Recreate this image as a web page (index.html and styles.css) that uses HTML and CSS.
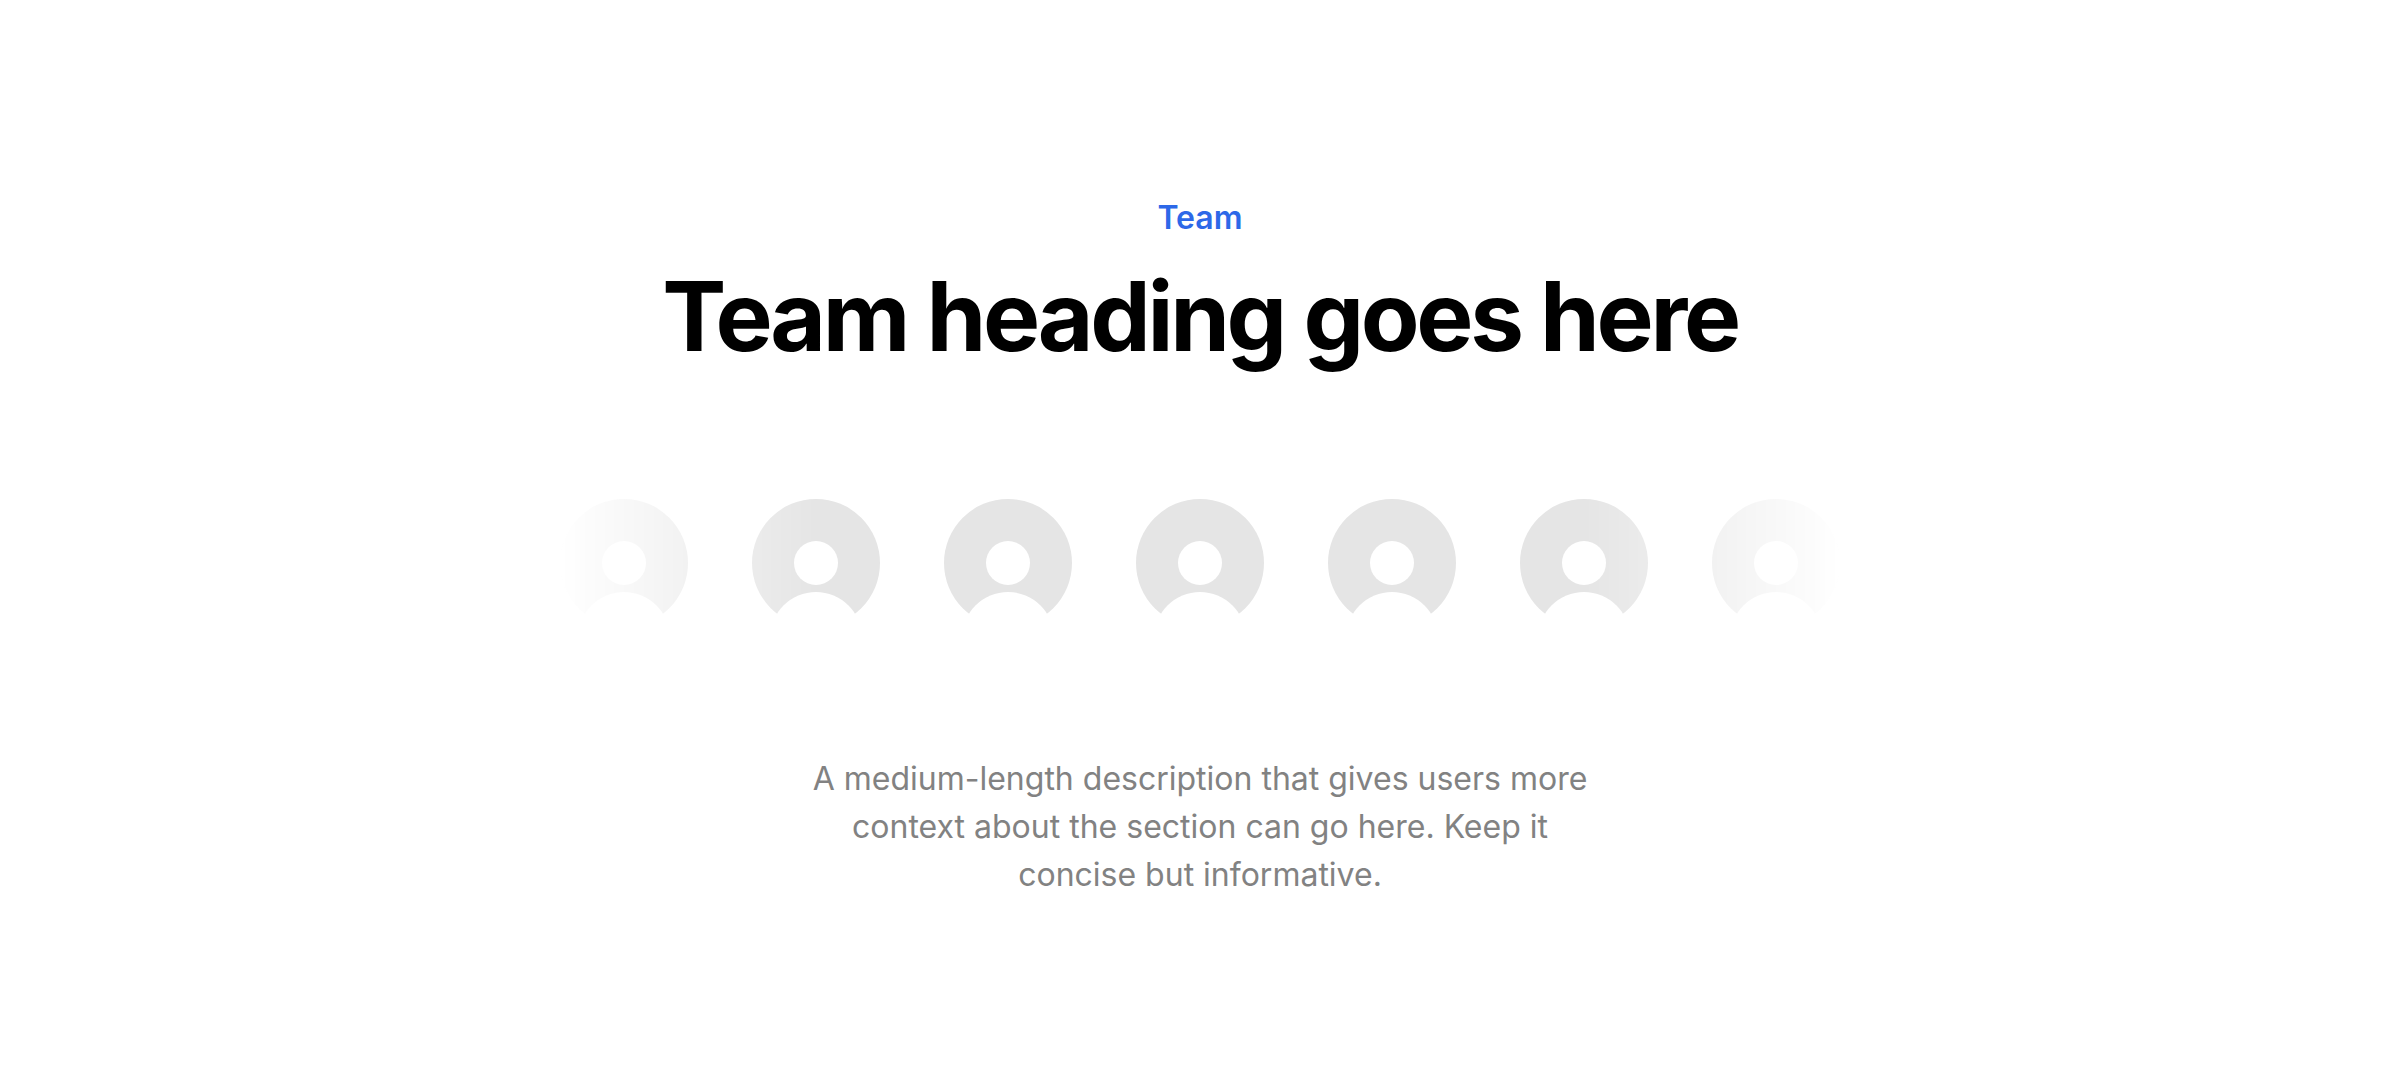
FILE: index.html
```html
<!DOCTYPE html>
<html lang="en">
<head>
    <meta charset="UTF-8">
    <meta name="viewport" content="width=device-width, initial-scale=1.0">
    <title>Team</title>
    <link rel="stylesheet" href="styles.css">
</head>
<body>
    <section class="team">
        <p class="eyebrow">Team</p>
        <h1>Team heading goes here</h1>
        <div class="avatars">
            <svg class="avatar" viewBox="0 0 128 128"><circle class="disc" cx="64" cy="64" r="64"/><circle class="cut" cx="64" cy="64" r="22"/><circle class="cut" cx="64" cy="139" r="46"/></svg>
            <svg class="avatar" viewBox="0 0 128 128"><circle class="disc" cx="64" cy="64" r="64"/><circle class="cut" cx="64" cy="64" r="22"/><circle class="cut" cx="64" cy="139" r="46"/></svg>
            <svg class="avatar" viewBox="0 0 128 128"><circle class="disc" cx="64" cy="64" r="64"/><circle class="cut" cx="64" cy="64" r="22"/><circle class="cut" cx="64" cy="139" r="46"/></svg>
            <svg class="avatar" viewBox="0 0 128 128"><circle class="disc" cx="64" cy="64" r="64"/><circle class="cut" cx="64" cy="64" r="22"/><circle class="cut" cx="64" cy="139" r="46"/></svg>
            <svg class="avatar" viewBox="0 0 128 128"><circle class="disc" cx="64" cy="64" r="64"/><circle class="cut" cx="64" cy="64" r="22"/><circle class="cut" cx="64" cy="139" r="46"/></svg>
            <svg class="avatar" viewBox="0 0 128 128"><circle class="disc" cx="64" cy="64" r="64"/><circle class="cut" cx="64" cy="64" r="22"/><circle class="cut" cx="64" cy="139" r="46"/></svg>
            <svg class="avatar" viewBox="0 0 128 128"><circle class="disc" cx="64" cy="64" r="64"/><circle class="cut" cx="64" cy="64" r="22"/><circle class="cut" cx="64" cy="139" r="46"/></svg>
        </div>
        <p class="description">A medium-length description that gives users more context about the section can go here. Keep it concise but informative.</p>
    </section>
</body>
</html>
```

FILE: styles.css
```css
html, body {
    height: 100%;
    overflow: hidden;
}
body {
    font-family: Inter, "Liberation Sans", sans-serif;
    background-color: #fff;
    margin: 0;
}
.team {
    display: flex;
    flex-direction: column;
    align-items: center;
    padding-top: 192px;
    text-align: center;
}
.eyebrow {
    margin: 0 0 16px;
    font-size: 32px;
    line-height: 51px;
    font-weight: 600;
    color: #2d68e8;
}
h1 {
    margin: 0 0 125px;
    font-size: 96px;
    line-height: 115px;
    font-weight: 700;
    letter-spacing: -3.3px;
    color: #000;
}
.avatars {
    display: flex;
    gap: 64px;
    width: 1280px;
    margin-bottom: 128px;
    -webkit-mask-image: linear-gradient(to right, transparent 0, #000 20%, #000 80%, transparent 100%);
    mask-image: linear-gradient(to right, transparent 0, #000 20%, #000 80%, transparent 100%);
}
.avatar {
    display: block;
    flex: none;
    width: 128px;
    height: 128px;
}
.disc {
    fill: #e5e5e5;
}
.cut {
    fill: #fff;
}
.description {
    margin: 0;
    width: 800px;
    font-size: 32px;
    line-height: 48px;
    color: #828282;
}
```
